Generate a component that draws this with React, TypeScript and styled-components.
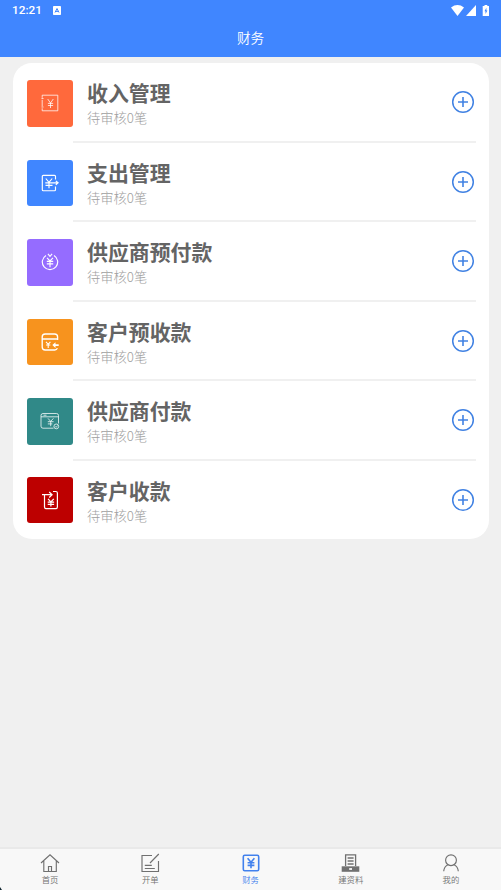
import React from 'react';
import styled, { createGlobalStyle } from 'styled-components';

const GlobalStyle = createGlobalStyle`
  * { box-sizing: border-box; }
  html, body { margin: 0; padding: 0; background: #f0f0f0; }
  body { font-family: 'Noto Sans CJK SC', sans-serif; }
  svg { display: block; flex: none; }
`;

const Screen = styled.div`
  display: flex;
  flex-direction: column;
  width: 100%;
  height: 100vh;
  overflow: hidden;
  background: #f0f0f0;
`;

const Header = styled.header`
  flex: none;
  height: 57px;
  background: #4086ff;
  color: #fff;
`;

const StatusBar = styled.div`
  display: flex;
  align-items: center;
  justify-content: space-between;
  height: 20px;
  padding: 0 11px 0 12px;
  font: 500 11.8px/20px Roboto, sans-serif;
`;

const StatusGroup = styled.div<{ $gap: number }>`
  display: flex;
  align-items: center;
  gap: ${(p) => p.$gap}px;
`;

const Title = styled.h1`
  margin: 0;
  height: 37px;
  font-size: 13.6px;
  font-weight: 350;
  line-height: 35px;
  text-align: center;
`;

const Content = styled.main`
  flex: 1;
  padding: 6px 12px 0 13px;
`;

const Card = styled.section`
  height: 476px;
  border-radius: 19px;
  background: #fff;
`;

const Row = styled.div`
  display: flex;
  height: 79.5px;
  padding-left: 14px;
`;

const IconTile = styled.div<{ $color: string; $last: boolean }>`
  display: flex;
  align-items: center;
  justify-content: center;
  flex: none;
  width: 46.4px;
  height: 46.5px;
  margin-top: ${(p) => (p.$last ? 16.3 : 17)}px;
  border-radius: 3px;
  background: ${(p) => p.$color};
  color: #fff;
`;

const RowBody = styled.div<{ $last: boolean }>`
  display: flex;
  flex: 1;
  justify-content: space-between;
  margin-right: 13px;
  padding: 16px 0 0 13.6px;
  border-bottom: ${(p) => (p.$last ? 'none' : '2px solid #f0f0f0')};
`;

const Name = styled.div`
  color: #646464;
  font-size: 20.9px;
  font-weight: 700;
  line-height: 27px;
`;

const Pending = styled.div`
  color: #9e9e9e;
  font-size: 13.3px;
  font-weight: 300;
  line-height: 23px;
`;

const AddButton = styled.button`
  align-self: flex-start;
  margin: 11.4px 1px 0 0;
  padding: 0;
  border: 0;
  background: none;
`;

const TabBar = styled.nav`
  display: flex;
  flex: none;
  height: 43px;
  border-top: 2px solid #e9e9e9;
  background: #f8f8f8;
`;

const Tab = styled.div<{ $active?: boolean }>`
  display: flex;
  flex: 1;
  flex-direction: column;
  align-items: center;
  padding-top: 3.5px;
  color: ${(p) => (p.$active ? '#4281ed' : '#707070')};
`;

const TabLabel = styled.span`
  font-size: 8.4px;
  font-weight: 350;
  line-height: 12px;
`;

const CornerMark = styled.i`
  position: fixed;
  left: 0;
  bottom: 0;
  width: 2px;
  height: 3px;
  background: #10252f;
  clip-path: polygon(0 0, 100% 100%, 0 100%);
`;

const Glyph = ({ width = 1, children }: { width?: number; children: React.ReactNode }) => (
  <svg width="20" height="20" viewBox="0 0 20 20" fill="none" stroke="currentColor" strokeWidth={width}>
    {children}
  </svg>
);

const IncomeIcon = () => (
  <Glyph width={0.75}>
    <path d="M2.2 2.2h15.6v15.6H2.2v-2.5m0-2v-6.5m0-2V2.2M1.5 5.5h2m-2 8.5h2" />
    <path d="m7.7 6 2.8 4 2.8-4m-2.8 4v5m-2.6-4.6h5.2m-5.2 2.1h5.2" />
  </Glyph>
);

const ExpenseIcon = () => (
  <Glyph width={1.15}>
    <path d="M15.5 6.5V3.3a1 1 0 0 0-1-1H3.3a1 1 0 0 0-1 1v13.4a1 1 0 0 0 1 1h11.2a1 1 0 0 0 1-1V13.5" />
    <path d="M5.8 5.5 9 9.3l3.2-3.8M9 9.3v5.9M5.3 9.8H18m-2.2-1.9 2.3 1.9-2.3 2M5.5 12.4h7" />
  </Glyph>
);

const PrepayIcon = () => (
  <Glyph width={1.15}>
    <path d="M6 3.4a7.7 7.7 0 1 0 8 0M7.9 1.9 10 4.3l2.1-2.4" />
    <path d="M7 5.9 10 9l3-3.1M10 9v6.2M6.8 9.4h6.4m-6.4 2.5h6.4" />
  </Glyph>
);

const PrereceiptIcon = () => (
  <Glyph width={1.35}>
    <path d="M17.6 8V5a3 3 0 0 0-3-3H5.2a3 3 0 0 0-3 3v10a3 3 0 0 0 3 3h9.4a3 3 0 0 0 2.8-1.7M2.5 7h15" />
    <path d="m6 9.9 2.2 2.4 2.2-2.4m-2.2 2.4v3.8M6.1 13h4.2" strokeWidth="1.1" />
    <path d="m12.3 13.1 3.2-2.8v1.9h3.2v1.8h-3.2v1.9z" fill="currentColor" stroke="none" />
  </Glyph>
);

const PaymentIcon = () => (
  <Glyph width={0.75}>
    <path d="M13.5 17.2H3a2 2 0 0 1-2-2V4.5a2 2 0 0 1 2-2h13.5a2 2 0 0 1 2 2v8M1 5.8h17.5M3.5 4.2h3" />
    <path d="m8 7.4 2.7 3 2.7-3m-2.7 3v4.8m-2.9-4.5h5.8m-5.8 2.2h4.5" />
    <circle cx="16.3" cy="15.4" r="2.4" />
    <path d="m15.1 15.3 1 1 1.6-1.8" />
  </Glyph>
);

const ReceiptIcon = () => (
  <Glyph width={1.2}>
    <path d="M13 1.5h2.8a1.6 1.6 0 0 1 1.6 1.6v14a1.6 1.6 0 0 1-1.6 1.6H6.1a1.6 1.6 0 0 1-1.6-1.6V4.8" />
    <path d="M2 4.7h10M9.2 2l2.9 2.7-2.9 2.8" />
    <path d="m8 8.8 2.9 3 2.9-3m-2.9 3v4.8m-3.2-4.5h6.4m-6.4 2.3h6.4" />
  </Glyph>
);

const AddIcon = () => (
  <svg width="24" height="24" viewBox="0 0 24 24" fill="none" stroke="#4182e3">
    <circle cx="12" cy="12" r="10.3" strokeWidth="1.5" />
    <path d="M12 7v10M7 12h10" strokeWidth="1.6" />
  </svg>
);

const ROWS = [
  { name: '收入管理', color: '#ff693c', Icon: IncomeIcon },
  { name: '支出管理', color: '#4086ff', Icon: ExpenseIcon },
  { name: '供应商预付款', color: '#956cff', Icon: PrepayIcon },
  { name: '客户预收款', color: '#f7931e', Icon: PrereceiptIcon },
  { name: '供应商付款', color: '#308988', Icon: PaymentIcon },
  { name: '客户收款', color: '#bd0000', Icon: ReceiptIcon },
];

const TABS = [
  { label: '首页', icon: <path d="M1 10 10 1.8 19 10M3.8 8v10.5h12.5V8M8.5 18.5v-5h3v5" /> },
  { label: '开单', icon: <path d="M12 2.5H2v16h16.5V8M18.8 1 10 10M4.8 12.3h7m-7 3.2h10" /> },
  {
    label: '财务',
    active: true,
    icon: (
      <>
        <rect x="2.3" y="2.3" width="15.4" height="15.4" rx="1.4" strokeWidth="1.6" />
        <path d="m6.6 5.2 3.4 4 3.4-4m-3.4 4v6M6.6 9.8h6.8m-6.8 2.6h6.8" strokeWidth="1.6" />
      </>
    ),
  },
  {
    label: '建资料',
    icon: (
      <>
        <path d="M4.6 13V1.9h10V13M6.6 5h6m-6 3h6m-6 3h6" strokeWidth="1.3" />
        <path d="M.7 13.3h17.6v5.5H.7z" fill="currentColor" stroke="none" />
        <path d="M8.2 16H11" stroke="#f8f8f8" strokeWidth="1.8" />
      </>
    ),
  },
  {
    label: '我的',
    icon: (
      <>
        <circle cx="10" cy="7.2" r="5.4" />
        <path d="M2.7 18.3c.3-3.4 1.9-5.5 4.2-6.6m6.2 0c2.3 1.1 3.9 3.2 4.2 6.6" />
      </>
    ),
  },
];

export default function App() {
  return (
    <Screen>
      <GlobalStyle />
      <Header>
        <StatusBar>
          <StatusGroup $gap={11}>
            <span>12:21</span>
            <svg width="8" height="9" viewBox="0 0 8 9">
              <rect width="8" height="9" rx=".8" fill="#fff" />
              <path d="m2 6.5 2-4 2 4M3 5.4h2" fill="none" stroke="#4086ff" />
            </svg>
          </StatusGroup>
          <StatusGroup $gap={2}>
            <svg width="13" height="11" viewBox="0 0 13 11">
              <path d="M0 2.5Q6.5-2.3 13 2.5L6.5 11z" fill="#fff" />
            </svg>
            <svg width="10" height="11" viewBox="0 0 10 11">
              <path d="M10 0v11H0z" fill="#fff" />
            </svg>
            <svg width="12" height="11" viewBox="0 0 12 11">
              <path d="M4.7 1h1.8V0h2.8v1H11v10H4.7z" fill="#fff" />
              <path d="M8.4 2.7 6.5 6.3h1V9l1.9-3.6h-1z" fill="#4086ff" />
            </svg>
          </StatusGroup>
        </StatusBar>
        <Title>财务</Title>
      </Header>
      <Content>
        <Card>
          {ROWS.map(({ name, color, Icon }, i) => {
            const last = i === ROWS.length - 1;
            return (
              <Row key={name}>
                <IconTile $color={color} $last={last}>
                  <Icon />
                </IconTile>
                <RowBody $last={last}>
                  <div>
                    <Name>{name}</Name>
                    <Pending>待审核0笔</Pending>
                  </div>
                  <AddButton aria-label="新增">
                    <AddIcon />
                  </AddButton>
                </RowBody>
              </Row>
            );
          })}
        </Card>
      </Content>
      <TabBar>
        {TABS.map(({ label, icon, active }) => (
          <Tab key={label} $active={active}>
            <Glyph width={1.15}>{icon}</Glyph>
            <TabLabel>{label}</TabLabel>
          </Tab>
        ))}
      </TabBar>
      <CornerMark />
    </Screen>
  );
}
